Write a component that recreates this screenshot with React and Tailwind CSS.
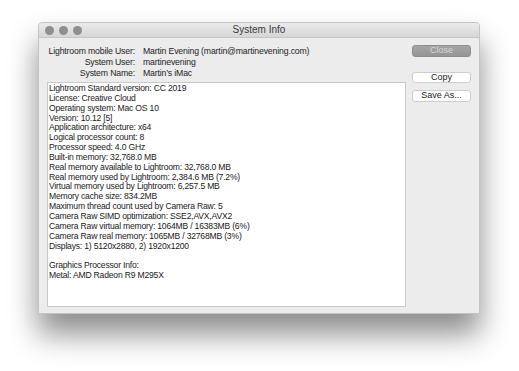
import React from 'react';

const infoLines = [
  'Lightroom Standard version: CC 2019',
  'License: Creative Cloud',
  'Operating system: Mac OS 10',
  'Version: 10.12 [5]',
  'Application architecture: x64',
  'Logical processor count: 8',
  'Processor speed: 4.0 GHz',
  'Built-in memory: 32,768.0 MB',
  'Real memory available to Lightroom: 32,768.0 MB',
  'Real memory used by Lightroom: 2,384.6 MB (7.2%)',
  'Virtual memory used by Lightroom: 6,257.5 MB',
  'Memory cache size: 834.2MB',
  'Maximum thread count used by Camera Raw: 5',
  'Camera Raw SIMD optimization: SSE2,AVX,AVX2',
  'Camera Raw virtual memory: 1064MB / 16383MB (6%)',
  'Camera Raw real memory: 1065MB / 32768MB (3%)',
  'Displays: 1) 5120x2880, 2) 1920x1200',
  '',
  'Graphics Processor Info:',
  'Metal: AMD Radeon R9 M295X',
];

const userRows = [
  ['Lightroom mobile User:', 'Martin Evening (martin@martinevening.com)'],
  ['System User:', 'martinevening'],
  ['System Name:', 'Martin’s iMac'],
];

const App = () => {
  return (
    <div
      className="w-[519px] h-[371px] bg-white pt-[22px] pl-[38px] overflow-hidden"
      style={{ fontFamily: '"Liberation Sans", Arial, sans-serif' }}
    >
      <div className="w-[442px] h-[292px] bg-[#ececec] border border-[#c4c4c4] rounded-t-[4px] shadow-[0_20px_30px_rgba(0,0,0,0.45)] flex flex-col">
        {/* title bar */}
        <div className="h-[15px] relative flex items-center justify-center bg-gradient-to-b from-[#ebebeb] to-[#d6d6d6] border-b border-[#c6c6c6] rounded-t-[4px]">
          <div className="absolute left-[6px] top-[3px] flex gap-[5px]">
            <span className="w-[9px] h-[9px] rounded-full bg-[#8f8f8f]" />
            <span className="w-[9px] h-[9px] rounded-full bg-[#8f8f8f]" />
            <span className="w-[9px] h-[9px] rounded-full bg-[#8f8f8f]" />
          </div>
          <span className="text-[10px] text-[#3a3a3a] leading-none">System Info</span>
        </div>

        <div className="flex flex-1 pl-[8px] pr-[8px] pt-[7px] pb-[6px] gap-[6px]">
          <div className="w-[360px] flex flex-col">
            <div className="flex flex-col pt-[1px] pb-[3px]">
              {userRows.map(([label, value]) => (
                <div key={label} className="flex h-[11px] items-center text-[8.7px] tracking-[-0.15px] text-[#222] whitespace-nowrap">
                  <span className="w-[88px] text-right">{label}</span>
                  <span className="ml-[8px]">{value}</span>
                </div>
              ))}
            </div>
            <div className="flex-1 bg-white border border-[#c9c9c9] pl-[1px] pt-[1px] text-[8.6px] tracking-[-0.2px] leading-[9.85px] text-[#1a1a1a]">
              {infoLines.map((line, i) => (
                <div key={i} className="h-[9.85px] whitespace-nowrap">{line}</div>
              ))}
            </div>
          </div>

          <div className="w-[59px] flex flex-col">
            <div className="h-[12px] rounded-[3px] bg-gradient-to-b from-[#a5a5a5] to-[#959595] border border-[#8d8d8d] flex items-center justify-center text-[9px] text-[#d6d6d6]">
              Close
            </div>
            <div className="mt-[15px] h-[11px] rounded-[3px] bg-white border border-[#cdcdcd] flex items-center justify-center text-[9px] text-[#222]">
              Copy
            </div>
            <div className="mt-[7px] h-[12px] rounded-[3px] bg-white border border-[#cdcdcd] flex items-center justify-center text-[9px] text-[#222]">
              Save As...
            </div>
          </div>
        </div>
      </div>
    </div>
  );
};

export default App;
